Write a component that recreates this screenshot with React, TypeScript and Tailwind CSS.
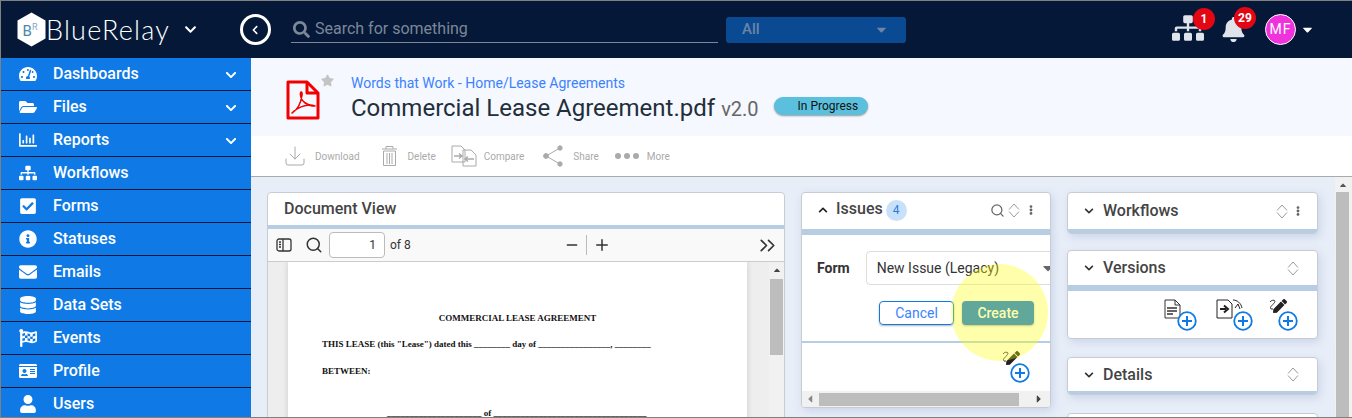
import { FaTachometerAlt, FaFolderOpen, FaRegChartBar, FaSitemap, FaCheckSquare, FaInfoCircle, FaEnvelope, FaDatabase, FaFlagCheckered, FaIdCard, FaUser, FaBell, FaChevronDown, FaChevronUp, FaChevronLeft, FaStar, FaCaretDown, FaCaretUp, FaCaretLeft, FaCaretRight, FaEllipsisV, FaSearch, FaPen } from "react-icons/fa";
import { Search, Download, Minus, Plus, ChevronsRight } from "lucide-react";

const roboto = { fontFamily: "Roboto, sans-serif" };

const navItems = [
  { label: "Dashboards", icon: FaTachometerAlt, more: true },
  { label: "Files", icon: FaFolderOpen, more: true },
  { label: "Reports", icon: FaRegChartBar, more: true },
  { label: "Workflows", icon: FaSitemap },
  { label: "Forms", icon: FaCheckSquare },
  { label: "Statuses", icon: FaInfoCircle },
  { label: "Emails", icon: FaEnvelope },
  { label: "Data Sets", icon: FaDatabase },
  { label: "Events", icon: FaFlagCheckered },
  { label: "Profile", icon: FaIdCard },
  { label: "Users", icon: FaUser },
];

function SortIcon() {
  return (
    <svg width="12" height="15" viewBox="0 0 12 15" fill="none" stroke="#9a9a9a" strokeWidth="1">
      <path d="M1 6.5 L6 1 L11 6.5" />
      <path d="M1 8.5 L6 14 L11 8.5" />
    </svg>
  );
}

function PlusCircle() {
  return (
    <svg width="20" height="20" viewBox="0 0 20 20" fill="#fff" stroke="#0f7ae5">
      <circle cx="10" cy="10" r="8.8" strokeWidth="1.8" />
      <path d="M10 5 V15 M5 10 H15" strokeWidth="2" />
    </svg>
  );
}

function SignIcon() {
  return (
    <span className="relative block w-[18px] h-[16px]">
      <FaPen className="absolute right-0 top-0 text-[#222] text-[14px]" />
      <svg className="absolute left-0 top-0" width="10" height="14" viewBox="0 0 10 14" fill="none" stroke="#333" strokeWidth="1">
        <path d="M1 3 C3 0 8 1 5 4 C4 6 0 8 2 10 L4 10" />
      </svg>
    </span>
  );
}

function PdfIcon() {
  return (
    <svg width="34" height="40" viewBox="0 0 34 40" fill="none" stroke="#f00000" strokeLinejoin="round">
      <path d="M2 2 H21 L32 13 V38 H2 Z" strokeWidth="3" />
      <path d="M21 2 V13 H32" strokeWidth="3" />
      <path d="M6 33 C11 30 15 23 16 15 C16.5 11 14 11 14.5 15 C15 21 21 26 29 26 C24 24 14 25 6 33 Z" strokeWidth="1.6" />
    </svg>
  );
}

function SidePanel({ title, dots, headH, stripH, children }: { title: string; dots?: boolean; headH: string; stripH: string; children?: React.ReactNode }) {
  return (
    <div className="bg-white rounded border border-[#c8ccd2] shadow-[2px_3px_8px_rgba(110,140,190,0.25)] overflow-hidden">
      <div className={`${headH} flex items-center pl-4 ${dots ? "pr-[14px]" : "pr-[18px]"}`}>
        <FaChevronDown className="text-[10px] text-[#333]" />
        <span className="ml-[9px] text-[16px] font-medium text-[#444]">{title}</span>
        <span className="ml-auto flex items-center gap-[5px]">
          <SortIcon />
          {dots && <FaEllipsisV className="text-[10px] text-[#666]" />}
        </span>
      </div>
      <div className={`${stripH} bg-[#b7cde4]`} />
      {children}
    </div>
  );
}

export default function App() {
  return (
    <div className="relative w-[1352px] h-[418px] overflow-hidden bg-[#808080] p-px pr-0" style={roboto}>
      {/* Top bar */}
      <header className="h-[57px] bg-[#051838] flex items-center text-white">
        <div className="w-[239px] flex items-center pl-4">
          <svg width="29" height="35" viewBox="0 0 29 35">
            <path d="M14.5 0.5 L28.5 8.5 V26.5 L14.5 34.5 L0.5 26.5 V8.5 Z" fill="#fff" />
            <text x="5.5" y="24" fontSize="15" fill="#4a87b0" fontFamily="Roboto">B</text>
            <text x="15" y="18" fontSize="9" fill="#7fa8c6" fontFamily="Roboto">R</text>
          </svg>
          <span className="text-[27px] tracking-[1.2px] leading-none font-light" style={{ fontFamily: "Lato, sans-serif" }}>BlueRelay</span>
          <FaChevronDown className="ml-[14px] text-[13px]" />
        </div>
        <span className="w-[31px] h-[31px] rounded-full border-[3px] border-white flex items-center justify-center">
          <FaChevronLeft className="text-[10px] -ml-px" />
        </span>
        <div className="ml-[20px] w-[427px] h-[27px] border-b border-[#7c8799] flex items-center text-[#7c8799] text-[16px]">
          <FaSearch className="ml-[2px] mr-[5px] text-[17px]" />
          Search for something
        </div>
        <div className="ml-2 w-[180px] h-[26px] rounded-[3px] bg-[#0a4a93] flex items-center justify-between pl-4 pr-[17px] text-[15px] font-medium text-[#6c84a8]">
          All
          <FaCaretDown className="text-[15px]" />
        </div>
        <div className="ml-auto flex items-center pr-[37px]">
          <span className="relative -translate-y-[2px]">
            <FaSitemap className="text-[32px] text-[#dfe3ea]" />
            <span className="absolute -right-[11px] -top-[4px] w-[22px] h-[22px] rounded-full bg-[#e30613] flex items-center justify-center text-[12px] font-bold">1</span>
          </span>
          <span className="relative ml-[17px]">
            <FaBell className="text-[25px] text-[#dfe3ea]" />
            <span className="absolute -right-[10px] -top-[10px] w-[22px] h-[22px] rounded-full bg-[#e30613] flex items-center justify-center text-[12px] font-bold">29</span>
          </span>
          <span className="ml-[19px] w-[31px] h-[31px] rounded-full border border-white bg-[#ee33dd] flex items-center justify-center text-[14px] tracking-[1px]">MF</span>
          <FaCaretDown className="ml-[4px] text-[15px]" />
        </div>
      </header>

      <div className="flex h-[359px]">
        {/* Sidebar */}
        <nav className="w-[250px] shrink-0 bg-[#0f7ae5] text-white">
          {navItems.map((item) => (
            <div key={item.label} className="h-[33px] border-b border-[#051838] flex items-center text-[16px] font-medium pb-px">
              <span className="w-[52px] flex justify-center pl-[1px]">
                <item.icon className="text-[18px]" />
              </span>
              <span>{item.label}</span>
              {item.more && <FaChevronDown className="ml-auto mr-[14px] text-[12px] mt-[3px]" />}
            </div>
          ))}
        </nav>

        {/* Main */}
        <main className="relative flex-1 min-w-0 bg-[#e8eef8] overflow-hidden flex">
          <div className="flex-1 min-w-0">
            <div className="-mr-[17px] h-[78px] bg-[#f5f8fe] flex items-start pl-[35px] pt-[15px]">
              <span className="mt-[7px] shrink-0"><PdfIcon /></span>
              <FaStar className="text-[13px] text-[#c4c4c4] ml-[1px] mt-px shrink-0" />
              <div className="ml-[17px]">
                <div className="text-[14px] leading-[20px] text-[#3b82ff]">Words that Work - Home/Lease Agreements</div>
                <div className="flex items-baseline leading-[30px]">
                  <span className="text-[24px] text-[#222e3a]">Commercial Lease Agreement.pdf</span>
                  <span className="ml-[6px] text-[20px] text-[#666]">v2.0</span>
                  <span className="ml-[15px] self-center -mt-[6px] w-[94px] h-[18px] rounded-[9px] bg-[#5bc0de] text-[12px] leading-[18px] text-[#111] pl-[24px] shadow-[0_1px_2px_rgba(0,0,0,.4)]">In Progress</span>
                </div>
              </div>
            </div>
            <div className="-mr-[17px] h-[41px] bg-white border-b border-[#aaa] flex items-center pl-[32px] text-[10px] text-[#aaa]">
              <Download size={24} strokeWidth={1} />
              <span className="ml-[8px]">Download</span>
              <svg className="ml-[16px]" width="24" height="24" viewBox="0 0 24 24" fill="none" stroke="#aaa">
                <path d="M6 5 H21 M10 5 V2.5 H17 V5 M7.5 7 H19.5 V21.5 H7.5 Z M11 9 V20 M13.5 9 V20 M16 9 V20" />
              </svg>
              <span className="ml-[8px]">Delete</span>
              <svg className="ml-[15px]" width="26" height="22" viewBox="0 0 26 22" fill="#fff" stroke="#aaa">
                <path d="M1 1 H10 L14 5 V17 H1 Z M12 5 H20 L25 10 V21 H12 Z" />
                <path d="M3 11 H10 M8 8.5 L11 11 L8 13.5 M23 14 H15 M17 11.5 L14 14 L17 16.5" strokeWidth="1.4" />
              </svg>
              <span className="ml-[7px]">Compare</span>
              <svg className="ml-[16px]" width="24" height="24" viewBox="0 0 24 24" fill="#aaa" stroke="#aaa">
                <path d="M6 12 L20 4 M6 12 L20 20" fill="none" />
                <circle cx="6" cy="12" r="2.4" />
                <circle cx="20" cy="4" r="2.2" />
                <circle cx="20" cy="20" r="2.2" />
              </svg>
              <span className="ml-[9px]">Share</span>
              <span className="ml-[16px] flex gap-[3px]">
                <i className="w-[6px] h-[6px] rounded-full bg-[#aaa]" />
                <i className="w-[6px] h-[6px] rounded-full bg-[#aaa]" />
                <i className="w-[6px] h-[6px] rounded-full bg-[#aaa]" />
              </span>
              <span className="ml-[8px]">More</span>
            </div>

            <div className="flex gap-4 pl-[16px] pt-[15px]">
              {/* Document view */}
              <div className="w-[518px] h-[240px] shrink-0 rounded-t border border-[#c8ccd2] bg-white overflow-hidden flex flex-col">
                <div className="h-[32px] flex items-center pl-4 text-[16px] font-medium text-[#444]">Document View</div>
                <div className="h-1 bg-[#b7cde4]" />
                <div className="h-[33px] bg-[#f9f9f9] border-b border-[#ccc] flex items-center text-[#333] text-[12px]">
                  <svg className="ml-2" width="16" height="14" viewBox="0 0 16 14" fill="none" stroke="#333" strokeWidth="1.3">
                    <rect x="1" y="1" width="14" height="12" rx="2" />
                    <path d="M7 1 V13 M3 4 H5 M3 6.5 H5 M3 9 H5" />
                  </svg>
                  <Search size={18} className="ml-[13px]" />
                  <span className="ml-[6px] w-[56px] h-[26px] bg-white rounded-sm border border-[#bbb] flex items-center justify-end pr-2 text-[12px]">1</span>
                  <span className="ml-[5px]">of 8</span>
                  <Minus size={16} className="ml-[153px]" />
                  <span className="mx-[6px] w-px h-[20px] bg-[#bbb]" />
                  <Plus size={18} />
                  <ChevronsRight size={25} strokeWidth={1.6} className="ml-auto mr-[4px]" />
                </div>
                <div className="flex-1 bg-[#eeeeee] flex min-h-0 overflow-hidden">
                  <div className="ml-[20px] w-[459px] shrink-0 bg-white shadow-[0_0_6px_rgba(0,0,0,.15)] pl-[34px] text-[9px] font-bold text-[#111] leading-[12px]" style={{ fontFamily: '"Liberation Serif", serif' }}>
                    <div className="pt-[50px] text-center pr-[34px]">COMMERCIAL LEASE AGREEMENT</div>
                    <div className="mt-[14px]">THIS LEASE (this "Lease") dated this ________ day of ________________, ________</div>
                    <div className="mt-[15px]">BETWEEN:</div>
                    <div className="mt-[30px] pl-[65px]">_____________________ of __________________________________</div>
                  </div>
                  <div className="ml-auto w-[15px] bg-[#f1f1f1] flex flex-col items-center pt-[3px]">
                    <FaCaretUp className="text-[10px] text-[#444]" />
                    <div className="mt-[4px] w-[13px] h-[76px] bg-[#bdbdbd]" />
                  </div>
                </div>
              </div>

              {/* Issues */}
              <div className="relative w-[250px] h-[216px] shrink-0 rounded border border-[#c8ccd2] bg-white shadow-[2px_3px_8px_rgba(110,140,190,0.25)] overflow-hidden flex flex-col">
                <div className="h-[36px] flex items-center pl-4 pr-[14px] -translate-y-[1px]">
                  <FaChevronUp className="text-[10px] text-[#222]" />
                  <span className="ml-[8px] text-[16px] font-medium text-[#444] -mt-[2px]">Issues</span>
                  <span className="ml-[3px] w-[21px] h-[21px] rounded-full bg-[#c8e1fb] flex items-center justify-center text-[12px] text-[#2f7ad8]">4</span>
                  <span className="ml-auto flex items-center">
                    <Search size={15} className="text-[#666]" />
                    <span className="ml-[3px] flex"><SortIcon /></span>
                    <FaEllipsisV className="ml-[6px] text-[10px] text-[#666]" />
                  </span>
                </div>
                <div className="h-[6px] bg-[#b7cde4]" />
                <div className="h-[108px] border-b-2 border-[#b7cde4] overflow-hidden">
                  <div className="flex items-center pl-[15px] pt-[16px]">
                    <span className="text-[14px] font-bold text-[#333]">Form</span>
                    <span className="ml-4 w-[194px] h-[34px] shrink-0 rounded-l border border-[#ddd] flex items-center pl-[10px] text-[14px] text-[#333]">
                      New Issue (Legacy)
                      <FaCaretDown className="ml-auto mr-[3px] text-[#666] text-[16px]" />
                    </span>
                  </div>
                  <div className="flex pl-[77px] gap-2 pt-[16px]">
                    <span className="w-[75px] h-[24px] rounded-sm border border-[#0f7ae5] flex items-center justify-center text-[14px] text-[#3b82ff] shadow-[0_1px_2px_rgba(0,0,0,.3)]">Cancel</span>
                    <span className="w-[72px] h-[24px] rounded-sm bg-[#0f7ae5] flex items-center justify-center text-[14px] font-medium text-white shadow-[0_1px_2px_rgba(0,0,0,.3)]">Create</span>
                  </div>
                </div>
                <div className="flex-1 relative">
                  <span className="absolute right-[30px] top-[8px]"><SignIcon /></span>
                  <span className="absolute right-[20px] top-[20px]"><PlusCircle /></span>
                </div>
                <div className="h-[16px] bg-[#f1f1f1] flex items-center">
                  <FaCaretLeft className="ml-[2px] text-[#888] text-[12px]" />
                  <span className="ml-[3px] w-[200px] h-[13px] bg-[#bdbdbd]" />
                  <FaCaretRight className="ml-auto mr-[5px] text-[#444] text-[12px]" />
                </div>
              </div>

              {/* Right column */}
              <div className="w-[251px] shrink-0 flex flex-col">
                <SidePanel title="Workflows" dots headH="h-[36px]" stripH="h-1" />
                <div className="mt-4">
                  <SidePanel title="Versions" headH="h-[34px]" stripH="h-[6px]">
                    <div className="h-[47px] flex items-start justify-end pr-[19px] pt-[8px]">
                      <span className="relative block w-[34px] h-[32px]">
                        <svg className="absolute left-[1px] top-0" width="17" height="20" viewBox="0 0 17 20" fill="#fff" stroke="#333">
                          <path d="M1 1 H11 L16 6 V19 H1 Z M11 1 V6 H16" />
                          <path d="M3 9 H13 M3 12 H13 M3 15 H9" strokeWidth="1.4" />
                        </svg>
                        <span className="absolute right-0 top-[12px]"><PlusCircle /></span>
                      </span>
                      <span className="relative block ml-[19px] w-[37px] h-[32px]">
                        <svg className="absolute left-0 top-0" width="28" height="20" viewBox="0 0 28 20" fill="#fff" stroke="#222">
                          <path d="M1 1 H12 L16 5 V19 H1 Z" />
                          <path d="M4 10 H10 M8 6.5 L12 10 L8 13.5" strokeWidth="2" />
                          <path d="M17 1 C21 1 25 4 26 9 M19 9 L22 5 L24 10" strokeWidth="1" fill="none" />
                        </svg>
                        <span className="absolute right-0 top-[12px]"><PlusCircle /></span>
                      </span>
                      <span className="relative block ml-[16px] w-[29px] h-[32px]">
                        <span className="absolute left-0 top-0"><SignIcon /></span>
                        <span className="absolute right-0 top-[12px]"><PlusCircle /></span>
                      </span>
                    </div>
                  </SidePanel>
                </div>
                <div className="mt-[18px]">
                  <SidePanel title="Details" headH="h-[33px]" stripH="h-[3px]" />
                </div>
                <div className="mt-[18px] h-[33px] bg-white rounded border border-[#c8ccd2]" />
              </div>
            </div>
          </div>

          {/* Page scrollbar */}
          <div className="w-[17px] mt-[119px] bg-[#f1f1f1] pl-px pt-[3px] flex flex-col">
            <FaCaretUp className="text-[10px] text-[#555] ml-[2px]" />
            <div className="mt-[2px] w-[13px] flex-1 bg-[#bdbdbd]" />
          </div>

          {/* Tutorial highlight */}
          <div className="absolute left-[700px] top-[206px] w-[97px] h-[97px] rounded-full bg-[rgba(255,255,15,0.35)]" />
        </main>
      </div>
    </div>
  );
}
